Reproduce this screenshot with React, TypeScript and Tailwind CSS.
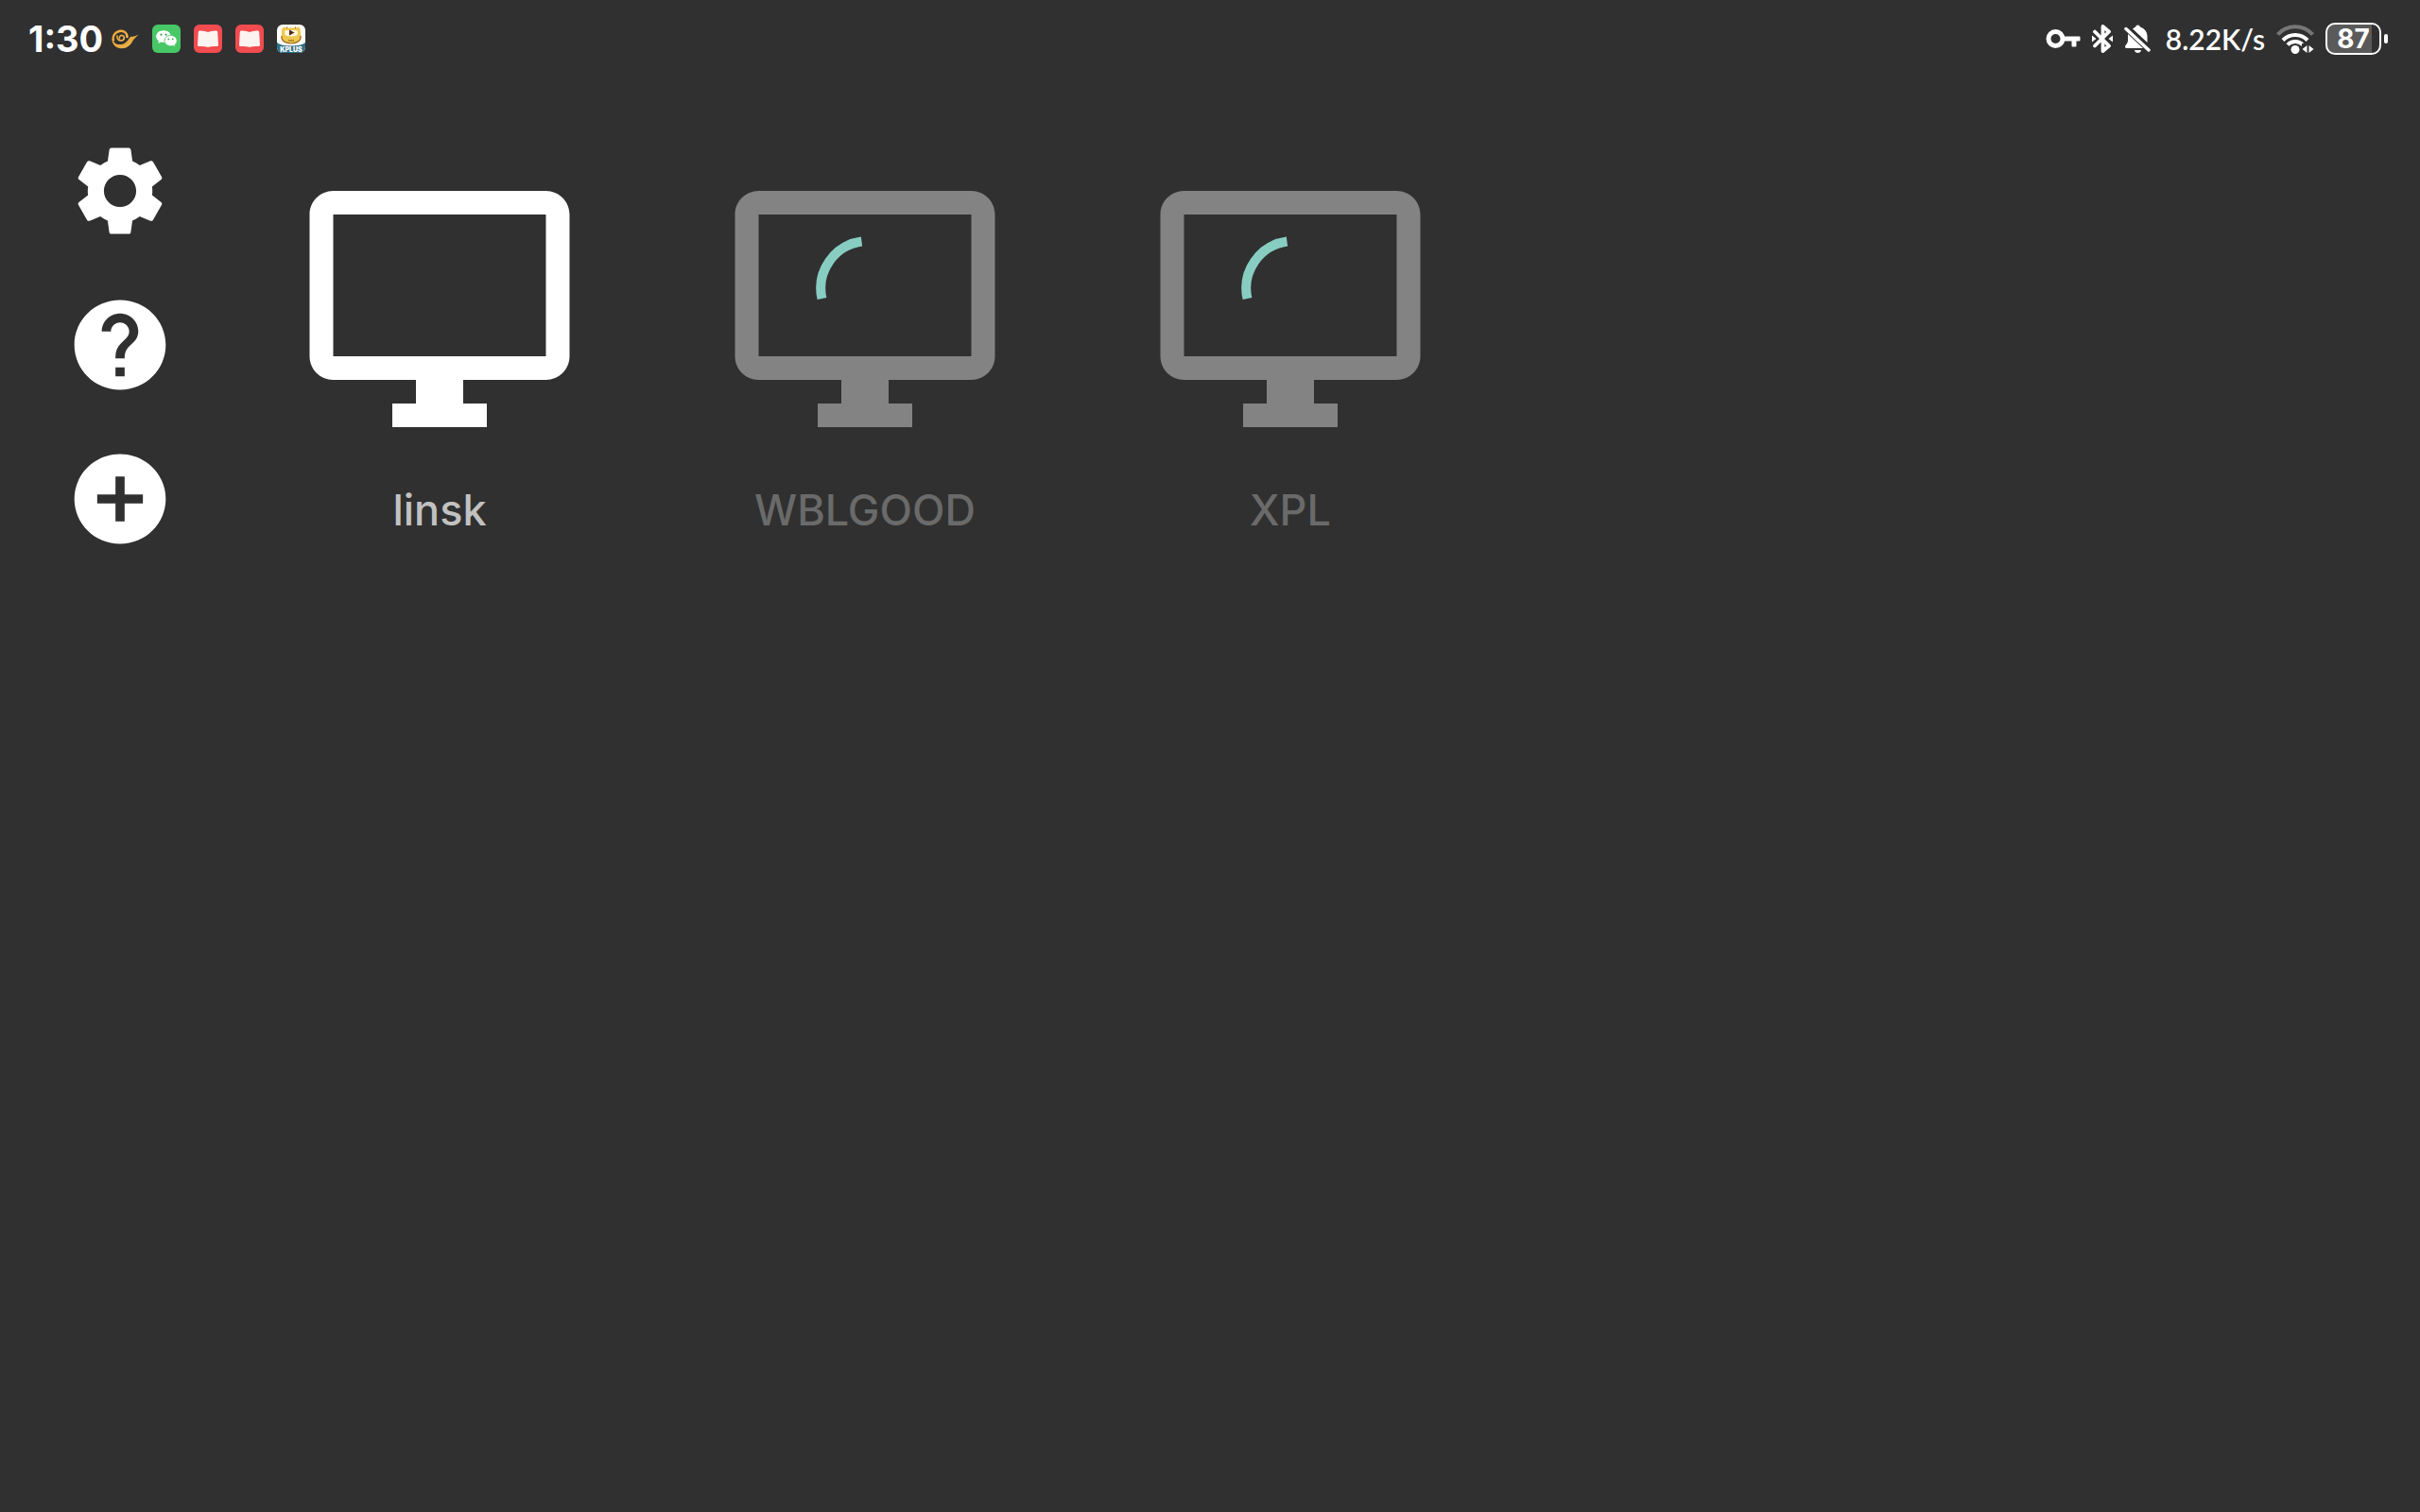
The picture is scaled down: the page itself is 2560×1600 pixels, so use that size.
import React from "react";

function KPlusIcon() {
  return (
    <svg viewBox="0 0 30 30" className="size-[30px] rounded-md" role="img" aria-label="KPlus">
      <rect width="30" height="30" fill="#fdfdfb" />
      <path d="M5 9C5 5 6 2 8 2.500Q9 3 10 4Q15 2.500 20 4Q21 3 22 2.500C24 2 25 5 25 9C26 14 24 20 15 20S4 14 5 9Z" fill="#eec84f" />
      <path d="M10 4L11 2.500M20 4L19 2.500M5 12Q4 19 15 20Q26 19 25 12" fill="none" stroke="#9a6a1d" strokeWidth="1.200" />
      <path d="M9 6H20Q22 6 22 9Q22 12.500 15 12.500T8 9Q8 6 9 6Z" fill="#fff7de" />
      <path d="M13 5.500V11.500L18.500 8.500Z" fill="#5a2418" />
      <path d="M12 16.500Q13.500 18 15 16.500Q16.500 18 18 16.500" fill="none" stroke="#8a5a1a" strokeWidth="1" />
      <path d="M0 19Q4 22.500 15 22.500T30 19V30H0Z" fill="#2f6f86" />
      <text x="15" y="28.500" textAnchor="middle" fill="#fff" className="font-['Inter',sans-serif] text-[7px] font-black">
        KPLUS
      </text>
    </svg>
  );
}

function BookIcon() {
  return (
    <svg viewBox="0 0 30 30" className="size-[30px] rounded-md" role="img" aria-label="Reader">
      <rect width="30" height="30" fill="#f24c50" />
      <path d="M6 6.500Q11 6.200 15 8Q19 6.200 24 6.500Q25 6.500 25.200 8L26 21.500Q26 23 24.500 23Q19 22.500 15 24Q11 22.500 5.500 23Q4 23 4 21.500L4.800 8Q5 6.500 6 6.500Z" fill="#fdf3f0" />
    </svg>
  );
}

function WeChatIcon() {
  return (
    <svg viewBox="0 0 30 30" className="size-[30px] rounded-md" role="img" aria-label="WeChat">
      <rect width="30" height="30" fill="#48c766" />
      <path d="M12 6.200C7.500 6.200 4.200 9 4.200 12.600C4.200 14.700 5.300 16.400 7 17.600L6.300 20L9.200 18.500Q10.500 18.900 12.300 18.900C16.500 18.900 19.800 16.200 19.800 12.600C19.800 9 16.500 6.200 12 6.200Z" fill="#fff" />
      <path d="M19.600 11.500C23.500 11.500 26.200 14 26.200 17.100C26.200 18.900 25.300 20.400 23.900 21.400L24.400 23.600L22 22.400Q20.900 22.700 19.600 22.700C15.800 22.700 13 20.200 13 17.100C13 14 15.800 11.500 19.600 11.500Z" fill="#fff" stroke="#48c766" strokeWidth="0.800" />
      <g fill="#3aa956">
        <circle cx="9.500" cy="10.700" r="1.100" />
        <circle cx="14.600" cy="10.700" r="1.100" />
        <circle cx="17.400" cy="15.400" r="0.900" />
        <circle cx="21.800" cy="15.400" r="0.900" />
      </g>
    </svg>
  );
}

function SwirlIcon() {
  return (
    <svg viewBox="0 0 30 30" className="size-[30px]" role="img" aria-label="Browser">
      <defs>
        <linearGradient id="gold" x1="0" y1="0" x2="1" y2="1">
          <stop offset="0" stopColor="#f3ab3c" />
          <stop offset="0.600" stopColor="#e9a93f" />
          <stop offset="1" stopColor="#ffd774" />
        </linearGradient>
      </defs>
      <g fill="none" stroke="url(#gold)" strokeLinecap="round">
        <path d="M9.500 15C8.500 12.500 11 10.800 13 11.700C15.500 13 14.500 17 11 17C8 17 6.500 14.500 7 12" strokeWidth="1.600" />
        <path d="M17.500 13C17.500 8.500 13 5.800 9 7C4 8.500 1.800 12.500 3 16.500" strokeWidth="2.400" />
      </g>
      <path d="M1.500 13C2 20 7 21.500 11 21C16.500 20.500 18.500 16 20.500 13.500C22 11.800 23.500 14 29.500 10.500C27 13.500 24.500 15 23 18C21 22 17 25.200 11.500 25.200C5 25.200 0.500 20 1.500 13Z" fill="url(#gold)" />
    </svg>
  );
}

function StatusBar() {
  return (
    <header className="flex h-[82px] items-center justify-between pl-[30px] pr-[34px]">
      <div className="flex items-center gap-2">
        <time className="font-['Inter',sans-serif] text-[38px] font-bold leading-none">1:30</time>
        <div className="flex items-center gap-[14px]">
          <SwirlIcon />
          <WeChatIcon />
          <BookIcon />
          <BookIcon />
          <KPlusIcon />
        </div>
      </div>

      <div className="flex items-center gap-3">
        <svg viewBox="0 0 37 22" className="h-[22px] w-[37px]" fill="currentColor" role="img" aria-label="VPN">
          <path fillRule="evenodd" d="M10.500 1A10 10 0 1 1 10.500 21A10 10 0 0 1 10.500 1ZM10.500 6A5 5 0 1 0 10.500 16A5 5 0 0 0 10.500 6Z" />
          <path d="M19 8.500H35.500Q36.500 8.500 36.500 9.500V12.500Q36.500 13.500 35.500 13.500H32.500V18.500Q32.500 19.500 31.500 19.500H28.500Q27.500 19.500 27.500 18.500V13.500H19Z" />
        </svg>
        <svg viewBox="0 0 22 30" className="h-[30px] w-[22px]" role="img" aria-label="Bluetooth connected">
          <path d="M3 7.500L18 22.500L11.500 28V2L18 7.500L3 22.500" fill="none" stroke="currentColor" strokeWidth="3.800" strokeLinejoin="round" strokeLinecap="round" />
          <path d="M0 11.500L4.500 15L0 18.500ZM22 11.500L17.500 15L22 18.500Z" fill="currentColor" />
        </svg>
        <svg viewBox="0 0 28 30" className="h-[30px] w-[28px]" fill="currentColor" role="img" aria-label="Muted">
          <path d="M4 10L20 25H3Q1 25 1 23.500Q1 22.500 2 21.500Q4 19.500 4 17Z" />
          <path d="M9 4.500Q11 3 12 2.500Q12.500 0.500 14.500 0.500T17 2.500Q24 5 24.500 12V19L9 4.500Z" />
          <path d="M11 27H18Q17.500 30 14.500 30T11 27Z" />
          <path d="M5 3L28 24.500" stroke="#303030" strokeWidth="2" />
          <path d="M2 4.500L26 27" stroke="currentColor" strokeWidth="3.500" strokeLinecap="round" />
        </svg>
        <span className="ml-1 font-['Lato',sans-serif] text-[30px] font-semibold leading-none">8.22K/s</span>
        <svg viewBox="0 0 40 32" className="h-8 w-10" role="img" aria-label="Wi-Fi">
          <g fill="none" stroke="currentColor" strokeWidth="4">
            <path d="M1.500 11.500A25 25 0 0 1 38.500 11.500" stroke="#777" />
            <path d="M7 17.500A18 18 0 0 1 33 17.500" />
            <path d="M12 22.500A11 11 0 0 1 28 22.500" />
          </g>
          <path d="M27 21H40V32H27Z" fill="#303030" />
          <circle cx="20" cy="27.500" r="4.500" fill="currentColor" />
          <path d="M32.500 23V31L27.500 27ZM34.500 23V31L39.500 27Z" fill="currentColor" />
        </svg>
        <div className="flex items-center gap-[3px]">
          <div className="flex h-[34px] w-[59px] items-center justify-center rounded-[10px] border-2 border-white bg-linear-to-r from-[#5a5a5a] from-86% to-[#303030] to-86% font-['Inter',sans-serif] text-[28px] font-bold leading-none">
            87
          </div>
          <div className="h-[10px] w-1 rounded-sm bg-white" />
        </div>
      </div>
    </header>
  );
}

const monitor = "M21 2H3c-1.100 0-2 .9-2 2v12c0 1.100.9 2 2 2h7v2H8v2h8v-2h-2v-2h7c1.100 0 2-.9 2-2V4c0-1.100-.9-2-2-2zm0 14H3V4h18v12z";

const computers = [
  { name: "linsk", searching: false },
  { name: "WBLGOOD", searching: true },
  { name: "XPL", searching: true },
];

function Computer({ name, searching }: { name: string; searching: boolean }) {
  return (
    <button type="button" className="flex w-[450px] flex-col items-center">
      <svg viewBox="0 0 300 300" className="size-[300px]" aria-hidden="true">
        <path d={monitor} transform="scale(12.500)" fill={searching ? "#838383" : "#fff"} />
        {searching && <path d="M146.500 78.500A50 50 0 0 0 104.500 139" fill="none" stroke="#88cdc2" strokeWidth="10" />}
      </svg>
      <span className={searching ? "mt-9 text-[45px] font-medium leading-[54px] text-[#6a6a6a]" : "mt-9 text-[45px] font-medium leading-[54px] text-[#c1c1c1]"}>
        {name}
      </span>
    </button>
  );
}

export default function App() {
  return (
    <div className="min-h-screen bg-[#303030] font-['Inter',sans-serif] text-white">
      <StatusBar />
      <div className="flex">
        <nav className="flex w-60 shrink-0 flex-col items-center gap-[49px] pl-[14px] pt-[63px]">
          <button type="button" aria-label="Settings">
            <svg viewBox="0 0 24 24" className="size-[114px]" fill="currentColor">
              <path d="M19.140 12.940c.04-.3.060-.61.060-.94 0-.32-.02-.64-.07-.94l2.030-1.580c.18-.14.23-.41.12-.61l-1.920-3.320c-.12-.22-.37-.29-.59-.22l-2.390.96c-.5-.38-1.030-.7-1.620-.94l-.36-2.540c-.04-.24-.24-.41-.48-.41h-3.840c-.24 0-.43.17-.47.41l-.36 2.540c-.59.24-1.130.57-1.620.94l-2.390-.96c-.22-.08-.47 0-.59.22L2.740 8.870c-.12.21-.08.47.12.61l2.030 1.580c-.05.3-.09.63-.09.94s.02.64.07.94l-2.030 1.580c-.18.14-.23.41-.12.61l1.920 3.320c.12.22.37.29.59.22l2.390-.96c.5.38 1.030.7 1.620.94l.36 2.540c.05.24.24.41.48.41h3.840c.24 0 .44-.17.47-.41l.36-2.540c.59-.24 1.130-.56 1.620-.94l2.390.96c.22.08.47 0 .59-.22l1.920-3.320c.12-.22.07-.47-.12-.61l-2.010-1.580zM12 15.600c-1.980 0-3.600-1.620-3.600-3.600s1.620-3.600 3.600-3.600 3.600 1.620 3.600 3.600-1.620 3.600-3.600 3.600z" />
            </svg>
          </button>
          <button type="button" aria-label="Help">
            <svg viewBox="0 0 24 24" preserveAspectRatio="none" className="h-[114px] w-[116px]" fill="currentColor">
              <path d="M12 2C6.480 2 2 6.480 2 12s4.480 10 10 10 10-4.480 10-10S17.520 2 12 2zm1 17h-2v-2h2v2zm2.070-7.750l-.9.920C13.450 12.900 13 13.500 13 15h-2v-.5c0-1.100.45-2.100 1.170-2.830l1.240-1.260c.37-.36.59-.86.59-1.410 0-1.100-.9-2-2-2s-2 .9-2 2H8c0-2.210 1.790-4 4-4s4 1.790 4 4c0 .88-.36 1.680-.93 2.250z" />
            </svg>
          </button>
          <button type="button" aria-label="Add computer">
            <svg viewBox="0 0 24 24" preserveAspectRatio="none" className="h-[114px] w-[116px]" fill="currentColor">
              <path d="M12 2C6.480 2 2 6.480 2 12s4.480 10 10 10 10-4.480 10-10S17.520 2 12 2zm5 11h-4v4h-2v-4H7v-2h4V7h2v4h4v2z" />
            </svg>
          </button>
        </nav>
        <main className="flex flex-1 flex-wrap pt-[95px]">
          {computers.map((c) => (
            <Computer key={c.name} name={c.name} searching={c.searching} />
          ))}
        </main>
      </div>
    </div>
  );
}
